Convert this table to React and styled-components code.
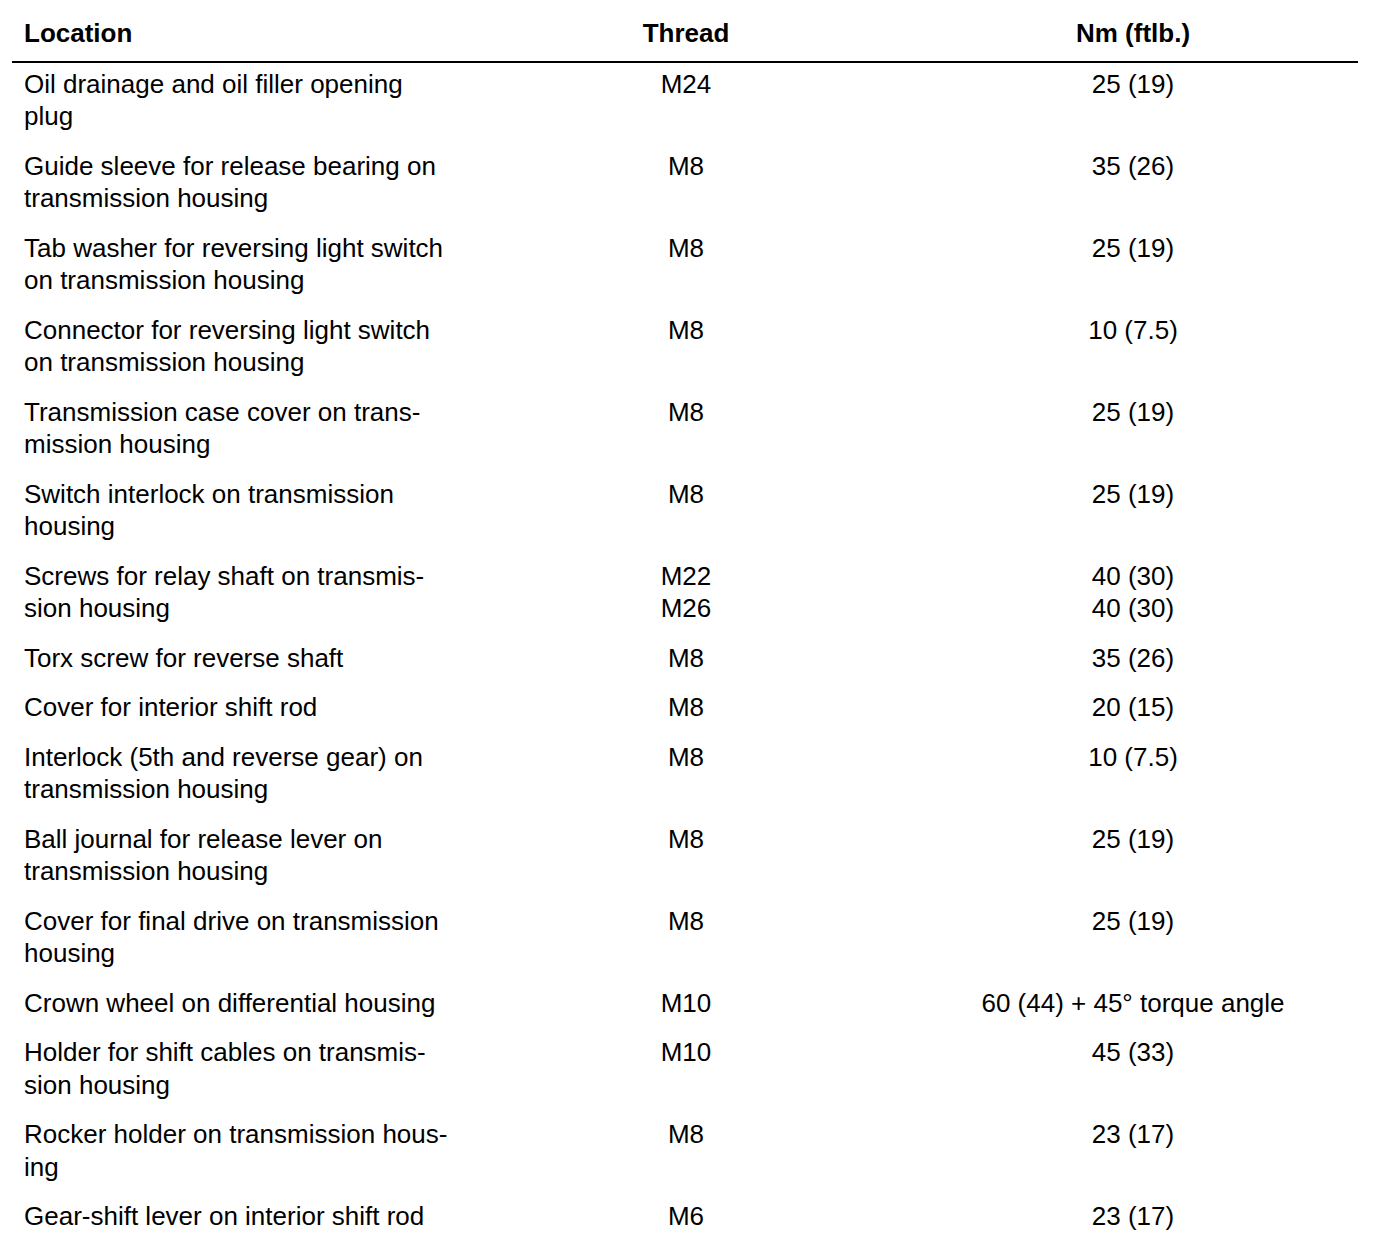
import React from 'react';
import styled, {createGlobalStyle} from 'styled-components';

const GlobalStyle = createGlobalStyle`
	html, body {
		margin: 0;
		padding: 0;
		background: #fff;
	}
	body {
		font-family: "Liberation Sans", Arial, sans-serif;
		color: #000;
	}
`;

const Page = styled.div`
	width: 1392px;
	height: 1260px;
	padding-top: 17px;
	box-sizing: border-box;
	overflow: hidden;
`;

const Table = styled.div`
	margin-left: 12px;
	width: 1346px;
`;

const Row = styled.div`
	display: grid;
	grid-template-columns: 12px 440px 444px 450px;
	font-size: 26px;
	line-height: 32.5px;
	padding-bottom: 17px;
`;

const HeadRow = styled(Row)`
	font-weight: bold;
	padding-bottom: 11px;
	border-bottom: 2px solid #000;
	margin-bottom: 5px;
`;

const Cell = styled.div`
	grid-column: ${props => props.col + 1};
	text-align: ${props => props.center ? 'center' : 'left'};
	white-space: nowrap;
`;

const rows = [
	{loc: ['Oil drainage and oil filler opening', 'plug'], thread: ['M24'], nm: ['25 (19)']},
	{loc: ['Guide sleeve for release bearing on', 'transmission housing'], thread: ['M8'], nm: ['35 (26)']},
	{loc: ['Tab washer for reversing light switch', 'on transmission housing'], thread: ['M8'], nm: ['25 (19)']},
	{loc: ['Connector for reversing light switch', 'on transmission housing'], thread: ['M8'], nm: ['10 (7.5)']},
	{loc: ['Transmission case cover on trans-', 'mission housing'], thread: ['M8'], nm: ['25 (19)']},
	{loc: ['Switch interlock on transmission', 'housing'], thread: ['M8'], nm: ['25 (19)']},
	{loc: ['Screws for relay shaft on transmis-', 'sion housing'], thread: ['M22', 'M26'], nm: ['40 (30)', '40 (30)']},
	{loc: ['Torx screw for reverse shaft'], thread: ['M8'], nm: ['35 (26)']},
	{loc: ['Cover for interior shift rod'], thread: ['M8'], nm: ['20 (15)']},
	{loc: ['Interlock (5th and reverse gear) on', 'transmission housing'], thread: ['M8'], nm: ['10 (7.5)']},
	{loc: ['Ball journal for release lever on', 'transmission housing'], thread: ['M8'], nm: ['25 (19)']},
	{loc: ['Cover for final drive on transmission', 'housing'], thread: ['M8'], nm: ['25 (19)']},
	{loc: ['Crown wheel on differential housing'], thread: ['M10'], nm: ['60 (44) + 45° torque angle']},
	{loc: ['Holder for shift cables on transmis-', 'sion housing'], thread: ['M10'], nm: ['45 (33)']},
	{loc: ['Rocker holder on transmission hous-', 'ing'], thread: ['M8'], nm: ['23 (17)']},
	{loc: ['Gear-shift lever on interior shift rod'], thread: ['M6'], nm: ['23 (17)']},
];

const Lines = ({items}) => items.map((t, i) => <div key={i}>{t}</div>);

function App() {
	return (
		<Page>
			<GlobalStyle/>
			<Table>
				<HeadRow>
					<Cell col={1}>Location</Cell>
					<Cell col={2} center>Thread</Cell>
					<Cell col={3} center>Nm (ftlb.)</Cell>
				</HeadRow>
				{rows.map((r, i) => (
					<Row key={i}>
						<Cell col={1}><Lines items={r.loc}/></Cell>
						<Cell col={2} center><Lines items={r.thread}/></Cell>
						<Cell col={3} center><Lines items={r.nm}/></Cell>
					</Row>
				))}
			</Table>
		</Page>
	);
}

export default App;
